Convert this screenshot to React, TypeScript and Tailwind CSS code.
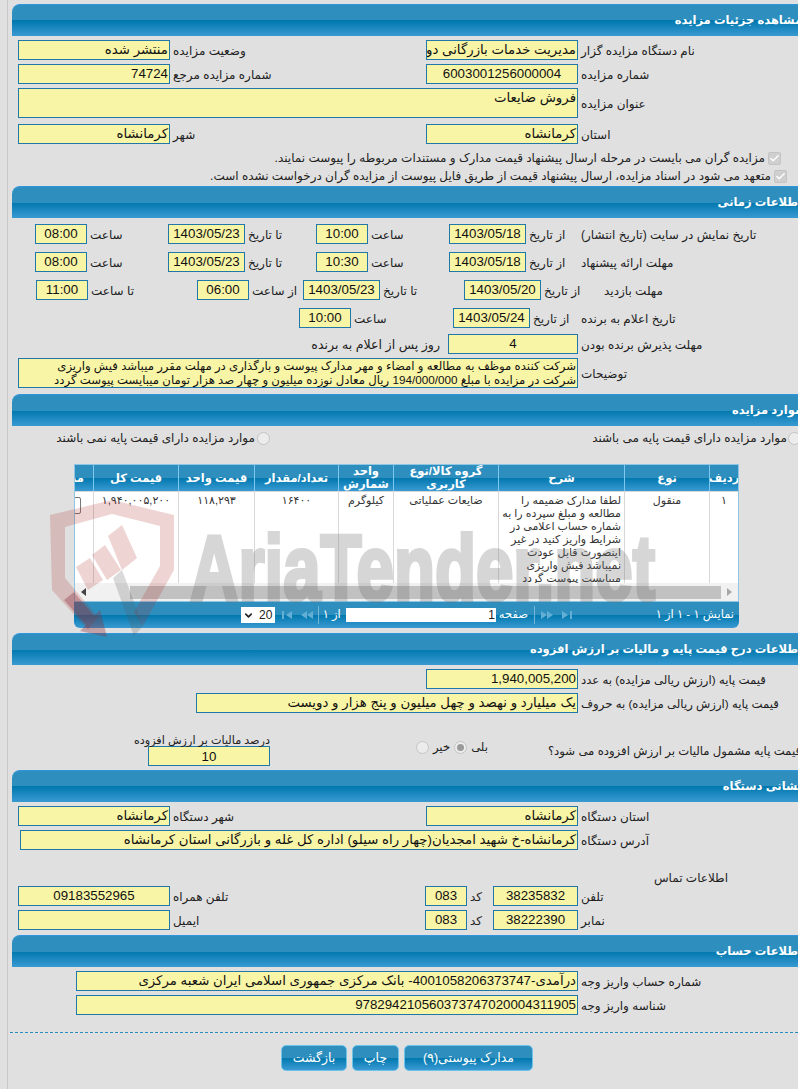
import React from 'react';
import { Check, ChevronDown } from 'lucide-react';

const barGradient = 'bg-[linear-gradient(to_bottom,#2e8fbf_0%,#2e8fbf_50%,#0078ae_50%,#3a9ad2_100%)]';

const SectionHeader: React.FC<{ title: string }> = ({ title }) => (
    <div className={`h-8 rounded-tl-lg border-t border-[#2f95dc] flex items-center pt-px ${barGradient}`}>
        <span className="mr-[-4px] text-white font-bold text-[11.5px] whitespace-nowrap">{title}</span>
    </div>
);

const Label: React.FC<{ className?: string; children?: React.ReactNode }> = ({ className = '', children }) => (
    <div className={`shrink-0 text-left pl-[3px] pt-[2px] whitespace-nowrap ${className}`}>{children}</div>
);

const Field: React.FC<{ className?: string; children?: React.ReactNode }> = ({ className = '', children }) => (
    <div className={`shrink-0 border border-[#1f78a8] bg-[#f8f5a6] px-px whitespace-nowrap overflow-hidden text-[#111] text-[13.3px] ${className}`}>{children}</div>
);

const Row: React.FC<{ className?: string; children?: React.ReactNode }> = ({ className = '', children }) => (
    <div className={`flex items-center h-5 leading-[18px] ${className}`}>{children}</div>
);

const Radio: React.FC<{ className?: string; checked?: boolean }> = ({ className = '', checked }) => (
    <span className={`shrink-0 w-[13px] h-[13px] rounded-full border border-[#c4c4c4] bg-[#ececec] flex items-center justify-center ${className}`}>
        {checked && <span className="w-[7px] h-[7px] rounded-full bg-[#9a9a9a]" />}
    </span>
);

const DisabledCheck: React.FC<{ className?: string }> = ({ className = '' }) => (
    <span className={`shrink-0 w-[13px] h-[13px] rounded-[2px] bg-[#cfcfcf] border border-[#c4c4c4] flex items-center justify-center ${className}`}>
        <Check size={11} strokeWidth={3} className="text-white" />
    </span>
);

const Th: React.FC<{ className?: string; children?: React.ReactNode }> = ({ className = '', children }) => (
    <div className={`border-l border-[#7cc8ee] flex items-center justify-center text-center text-white font-bold text-[11.5px] leading-[13px] overflow-hidden ${className}`}>{children}</div>
);

const Td: React.FC<{ className?: string; children?: React.ReactNode }> = ({ className = '', children }) => (
    <div className={`border-l border-[#d8d8d8] text-center text-[11px] leading-[13px] pt-[2px] text-[#333] overflow-hidden ${className}`}>{children}</div>
);

// pager arrows, flipped with the `flip` prop
const PagerEnd: React.FC<{ flip?: boolean }> = ({ flip }) => (
    <svg width="10" height="8" viewBox="0 0 10 8" className={flip ? '-scale-x-100' : ''} fill="#62aed4">
        <path d="M0 0 L6 4 L0 8 Z" />
        <rect x="8" y="0" width="2" height="8" />
    </svg>
);

const PagerDouble: React.FC<{ flip?: boolean }> = ({ flip }) => (
    <svg width="12" height="8" viewBox="0 0 12 8" className={flip ? '-scale-x-100' : ''} fill="#62aed4">
        <path d="M0 0 L6 4 L0 8 Z" />
        <path d="M6 0 L12 4 L6 8 Z" />
    </svg>
);

const gridCols = 'grid grid-cols-[29px_85px_126px_105px_55px_84px_76px_85px_20px]';

const Watermark: React.FC = () => (
    <svg dir="ltr" className="absolute left-0 top-0 pointer-events-none" width="798" height="1089" viewBox="0 0 798 1089">
        <g fill="#b02a2a" fillOpacity="0.2">
            <path d="M50 515 L112 500 L174 515 L174 570 L143 626 L134 612 L160 566 L160 526 L112 514 L65 527 L65 578 L98 617 L88 630 L52 590 Z" />
            <path d="M108 536 L122 525 L137 558 L122 570 Z" />
            <path d="M92 555 L105 545 L121 570 L107 580 Z" />
            <path d="M76 567 L90 558 L103 580 L88 590 Z" />
        </g>
        <path d="M113 578 L122 570 L143 626 L134 636 Z" fill="#555" fillOpacity="0.22" />
        <path d="M100 610 L107 637 L80 631 L86 625 L64 600 L74 592 L94 616 Z" fill="#8a2f3a" fillOpacity="0.35" />
        <text
            x="190"
            y="600"
            direction="ltr"
            textAnchor="start"
            textLength="465"
            lengthAdjust="spacingAndGlyphs"
            fontFamily="Liberation Sans, sans-serif"
            fontWeight="700"
            fontSize="92"
            fill="#6f6f6f"
            stroke="#6f6f6f"
            strokeWidth="4"
            opacity="0.28"
        >
            AriaTender.net
        </text>
    </svg>
);

const App: React.FC = () => {
    return (
        <div dir="rtl" className="relative w-[798px] h-[1089px] overflow-hidden bg-[#e0e0e0] text-[#222] text-[12px] [font-family:'Liberation_Sans','DejaVu_Sans',sans-serif]">
            <div className="ml-[7px] h-full border-l border-[#c8c8c8] pl-1 pt-1">
                {/* مشاهده جزئیات */}
                <SectionHeader title="مشاهده جزئیات مزایده" />
                <div className="h-[150px] pt-1">
                    <Row>
                        <Label className="w-[220px]">نام دستگاه مزایده گزار</Label>
                        <Field className="w-[152px] h-5">مدیریت خدمات بازرگانی دولت</Field>
                        <Label className="w-[256px]">وضعیت مزایده</Label>
                        <Field className="w-[152px] h-5">منتشر شده</Field>
                    </Row>
                    <Row className="mt-1">
                        <Label className="w-[220px]">شماره مزایده</Label>
                        <Field className="w-[152px] h-5 text-center">6003001256000004</Field>
                        <Label className="w-[256px]">شماره مزایده مرجع</Label>
                        <Field className="w-[152px] h-5">74724</Field>
                    </Row>
                    <Row className="mt-1 h-[30px]">
                        <Label className="w-[220px]">عنوان مزایده</Label>
                        <Field className="w-[560px] h-[30px]">فروش ضایعات</Field>
                    </Row>
                    <Row className="mt-1.5">
                        <Label className="w-[220px]">استان</Label>
                        <Field className="w-[152px] h-5">کرمانشاه</Field>
                        <Label className="w-[256px]">شهر</Label>
                        <Field className="w-[152px] h-5">کرمانشاه</Field>
                    </Row>
                    <div className="flex items-center h-4 mt-[6px] mr-[17px] gap-[3px]">
                        <DisabledCheck />
                        <span className="whitespace-nowrap">مزایده گران می بایست در مرحله ارسال پیشنهاد قیمت مدارک و مستندات مربوطه را پیوست نمایند.</span>
                    </div>
                    <div className="flex items-center h-4 mt-[2px] mr-[11px] gap-[3px]">
                        <DisabledCheck />
                        <span className="whitespace-nowrap">متعهد می شود در اسناد مزایده، ارسال پیشنهاد قیمت از طریق فایل پیوست از مزایده گران درخواست نشده است.</span>
                    </div>
                </div>

                {/* اطلاعات زمانی */}
                <SectionHeader title="اطلاعات زمانی" />
                <div className="h-[176px] pt-1.5">
                    <Row>
                        <Label className="w-[220px]">تاریخ نمایش در سایت (تاریخ انتشار)</Label>
                        <Label className="w-[52px]">از تاریخ</Label>
                        <Field className="w-[77px] h-5 text-center">1403/05/18</Field>
                        <Label className="w-[81px]">ساعت</Label>
                        <Field className="w-[52px] h-5 text-center">10:00</Field>
                        <Label className="w-[71px]">تا تاریخ</Label>
                        <Field className="w-[77px] h-5 text-center">1403/05/23</Field>
                        <Label className="w-[81px]">ساعت</Label>
                        <Field className="w-[52px] h-5 text-center">08:00</Field>
                    </Row>
                    <Row className="mt-2">
                        <Label className="w-[220px]">مهلت ارائه پیشنهاد</Label>
                        <Label className="w-[52px]">از تاریخ</Label>
                        <Field className="w-[77px] h-5 text-center">1403/05/18</Field>
                        <Label className="w-[81px]">ساعت</Label>
                        <Field className="w-[52px] h-5 text-center">10:30</Field>
                        <Label className="w-[71px]">تا تاریخ</Label>
                        <Field className="w-[77px] h-5 text-center">1403/05/23</Field>
                        <Label className="w-[81px]">ساعت</Label>
                        <Field className="w-[52px] h-5 text-center">08:00</Field>
                    </Row>
                    <Row className="mt-2">
                        <Label className="w-[197px]">مهلت بازدید</Label>
                        <Label className="w-[60px]">از تاریخ</Label>
                        <Field className="w-[77px] h-5 text-center">1403/05/20</Field>
                        <Label className="w-[84px]">تا تاریخ</Label>
                        <Field className="w-[77px] h-5 text-center">1403/05/23</Field>
                        <Label className="w-[54px]">از ساعت</Label>
                        <Field className="w-[52px] h-5 text-center">06:00</Field>
                        <Label className="w-[109px]">تا ساعت</Label>
                        <Field className="w-[52px] h-5 text-center">11:00</Field>
                    </Row>
                    <Row className="mt-2">
                        <Label className="w-[220px]">تاریخ اعلام به برنده</Label>
                        <Label className="w-[48px]">از تاریخ</Label>
                        <Field className="w-[77px] h-5 text-center">1403/05/24</Field>
                        <Label className="w-[102px]">ساعت</Label>
                        <Field className="w-[52px] h-5 text-center">10:00</Field>
                    </Row>
                    <Row className="mt-1.5">
                        <Label className="w-[220px]">مهلت پذیرش برنده بودن</Label>
                        <Field className="w-[130px] h-5 text-center">4</Field>
                        <span className="mr-2 pt-[2px] text-[12.6px] whitespace-nowrap">روز پس از اعلام به برنده</span>
                    </Row>
                    <Row className="mt-1 h-[30px]">
                        <Label className="w-[220px]">توضیحات</Label>
                        <Field className="w-[560px] h-[30px] leading-[14px]">
                            <span className="text-[11.7px]">
                                شرکت کننده موظف به مطالعه و امضاء و مهر مدارک پیوست و بارگذاری در مهلت مقرر میباشد فیش واریزی
                                <br />
                                شرکت در مزایده با مبلغ 194/000/000 ریال معادل نوزده میلیون و چهار صد هزار تومان میبایست پیوست گردد
                            </span>
                        </Field>
                    </Row>
                </div>

                {/* موارد مزایده */}
                <SectionHeader title="موارد مزایده" />
                <div className="h-[207px]">
                    <div className="flex items-center h-[22px] pt-[2px] mr-[-3px]">
                        <Radio />
                        <span className="w-[517px] shrink-0 mr-px whitespace-nowrap">موارد مزایده دارای قیمت پایه می باشند</span>
                        <Radio />
                        <span className="mr-[2px] whitespace-nowrap">موارد مزایده دارای قیمت پایه نمی باشند</span>
                    </div>
                    <div className="mt-4 mr-[59px] w-[665px]">
                        <div className="border border-[#8fc6e3] bg-white h-[138px] overflow-hidden">
                            <div className={`${gridCols} h-[26px] ${barGradient}`}>
                                <Th>ردیف</Th>
                                <Th>نوع</Th>
                                <Th>شرح</Th>
                                <Th>گروه کالا/نوع کاربری</Th>
                                <Th>واحد شمارش</Th>
                                <Th>تعداد/مقدار</Th>
                                <Th>قیمت واحد</Th>
                                <Th>قیمت کل</Th>
                                <Th className="justify-start pr-[9px] whitespace-nowrap">مدارک</Th>
                            </div>
                            <div className={`${gridCols} h-[92px] border-t border-[#d8d8d8]`}>
                                <Td>۱</Td>
                                <Td>منقول</Td>
                                <Td className="text-right pr-[3px] text-[11.8px] whitespace-nowrap">
                                    لطفا مدارک ضمیمه را
                                    <br />
                                    مطالعه و مبلغ سپرده را به
                                    <br />
                                    شماره حساب اعلامی در
                                    <br />
                                    شرایط واریز کنید در غیر
                                    <br />
                                    اینصورت قابل عودت
                                    <br />
                                    نمیباشد فیش واریزی
                                    <br />
                                    میبایست پیوست گردد
                                </Td>
                                <Td>ضایعات عملیاتی</Td>
                                <Td>کیلوگرم</Td>
                                <Td>۱۶۴۰۰</Td>
                                <Td>۱۱۸,۲۹۳</Td>
                                <Td>۱,۹۴۰,۰۰۵,۲۰۰</Td>
                                <Td className="relative">
                                    <span className="absolute top-[5px] right-[12px] w-[24px] h-[17px] border border-[#777] rounded-[2px] text-right pr-[10px] text-[10px] whitespace-nowrap">جزئیات</span>
                                </Td>
                            </div>
                            <div className="h-[18px] bg-[#f1f1f1] flex items-center px-[4px]">
                                <span className="ml-[6px] mr-[2px] w-0 h-0 border-y-[4px] border-y-transparent border-l-[5px] border-l-[#a8a8a8]" />
                                <div className="h-[13px] w-[591px] bg-[#c1c1c1]" />
                                <span className="mr-auto ml-[2px] w-0 h-0 border-y-[4px] border-y-transparent border-r-[5px] border-r-[#444]" />
                            </div>
                        </div>
                        <div className={`h-[26px] rounded-b-md flex items-center text-white text-[11.5px] ${barGradient}`}>
                            <span className="mr-[5px] w-[75px] shrink-0 whitespace-nowrap">نمایش ۱ - ۱ از ۱</span>
                            <span className="flex items-center gap-[9px] mr-[87px]">
                                <PagerEnd />
                                <PagerDouble />
                            </span>
                            <span className="mx-[6px] w-px h-[18px] bg-[#6fb6d8]" />
                            <span className="whitespace-nowrap">صفحه</span>
                            <span className="mr-[3px] w-[150px] h-[14px] bg-white text-[#222] text-[12px] leading-[14px] px-px shrink-0">1</span>
                            <span className="mr-[5px] whitespace-nowrap">از ۱</span>
                            <span className="mr-[4px] ml-[5px] w-px h-[18px] bg-[#6fb6d8]" />
                            <span className="flex items-center gap-[9px]">
                                <PagerDouble flip />
                                <PagerEnd flip />
                            </span>
                            <span dir="ltr" className="mr-[7px] w-[34px] h-[16px] bg-white text-[#222] text-[12px] leading-[16px] flex flex-row-reverse items-center justify-center gap-[5px] shrink-0">
                                20
                                <ChevronDown size={11} strokeWidth={3.5} />
                            </span>
                        </div>
                    </div>
                </div>

                {/* قیمت پایه */}
                <SectionHeader title="اطلاعات درج قیمت پایه و مالیات بر ارزش افزوده" />
                <div className="h-[105px] pt-1">
                    <Row>
                        <Label className="w-[220px] text-[11.7px]">قیمت پایه (ارزش ریالی مزایده) به عدد</Label>
                        <Field className="w-[152px] h-5">1,940,005,200</Field>
                    </Row>
                    <Row className="mt-1">
                        <Label className="w-[220px] text-[11.7px]">قیمت پایه (ارزش ریالی مزایده) به حروف</Label>
                        <Field className="w-[382px] h-5">یک میلیارد و نهصد و چهل میلیون و پنج هزار و دویست</Field>
                    </Row>
                    <div className="flex mt-[21px] h-[32px] text-[11.7px]">
                        <div className="w-[253px] mr-[-3px] shrink-0 pt-[8px] whitespace-nowrap">قیمت پایه مشمول مالیات بر ارزش افزوده می شود؟</div>
                        <div className="flex items-center h-[26px] gap-[4px] w-[278px] shrink-0 pr-[60px]">
                            <span className="whitespace-nowrap">بلی</span>
                            <Radio checked />
                            <span className="whitespace-nowrap">خیر</span>
                            <Radio />
                        </div>
                        <div className="mt-[-1px] w-[122px] shrink-0">
                            <div className="h-[12px] leading-[14px] text-[11.2px] whitespace-nowrap">درصد مالیات بر ارزش افزوده</div>
                            <Field className="mt-[1px] h-5 w-[122px] text-center">10</Field>
                        </div>
                    </div>
                </div>

                {/* نشانی */}
                <SectionHeader title="نشانی دستگاه" />
                <div className="h-[133px] pt-1">
                    <Row>
                        <Label className="w-[220px]">استان دستگاه</Label>
                        <Field className="w-[152px] h-5">کرمانشاه</Field>
                        <Label className="w-[256px]">شهر دستگاه</Label>
                        <Field className="w-[152px] h-5">کرمانشاه</Field>
                    </Row>
                    <Row className="mt-1">
                        <Label className="w-[220px]">آدرس دستگاه</Label>
                        <Field className="w-[558px] h-5">کرمانشاه-خ شهید امجدیان(چهار راه سیلو) اداره کل غله و بازرگانی استان کرمانشاه</Field>
                    </Row>
                    <div className="mt-[19px] h-[18px] mr-[70px] leading-[18px]">اطلاعات تماس</div>
                    <Row className="mt-[-1px]">
                        <Label className="w-[220px]">تلفن</Label>
                        <Field className="w-[85px] h-5 text-center">38235832</Field>
                        <Label className="w-[26px]">کد</Label>
                        <Field className="w-[42px] h-5 text-center">083</Field>
                        <Label className="w-[255px]">تلفن همراه</Label>
                        <Field className="w-[152px] h-5 text-center">09183552965</Field>
                    </Row>
                    <Row className="mt-1">
                        <Label className="w-[220px]">نمابر</Label>
                        <Field className="w-[85px] h-5 text-center">38222390</Field>
                        <Label className="w-[26px]">کد</Label>
                        <Field className="w-[42px] h-5 text-center">083</Field>
                        <Label className="w-[255px]">ایمیل</Label>
                        <Field className="w-[152px] h-5" />
                    </Row>
                </div>

                {/* حساب */}
                <SectionHeader title="اطلاعات حساب" />
                <div className="pt-1">
                    <Row>
                        <Label className="w-[220px]">شماره حساب واریز وجه</Label>
                        <Field className="w-[502px] h-5">درآمدی-4001058206373747- بانک مرکزی جمهوری اسلامی ایران شعبه مرکزی</Field>
                    </Row>
                    <Row className="mt-1">
                        <Label className="w-[220px]">شناسه واریز وجه</Label>
                        <Field className="w-[502px] h-5">978294210560373747020004311905</Field>
                    </Row>
                    <div className="mt-[17px] ml-[-2px] border-t border-dashed border-[#2a8cc0]" />
                    <div className="mt-3 flex gap-[5px] mr-[265px] text-[12.5px]">
                        <button className={`w-[129px] h-[26px] rounded-[5px] border border-[#6cc3ea] text-white ${barGradient}`}>مدارک پیوستی(۹)</button>
                        <button className={`w-[47px] h-[26px] rounded-[5px] border border-[#6cc3ea] text-white ${barGradient}`}>چاپ</button>
                        <button className={`w-[66px] h-[26px] rounded-[5px] border border-[#6cc3ea] text-white ${barGradient}`}>بازگشت</button>
                    </div>
                </div>
            </div>
            <Watermark />
        </div>
    );
};

export default App;
